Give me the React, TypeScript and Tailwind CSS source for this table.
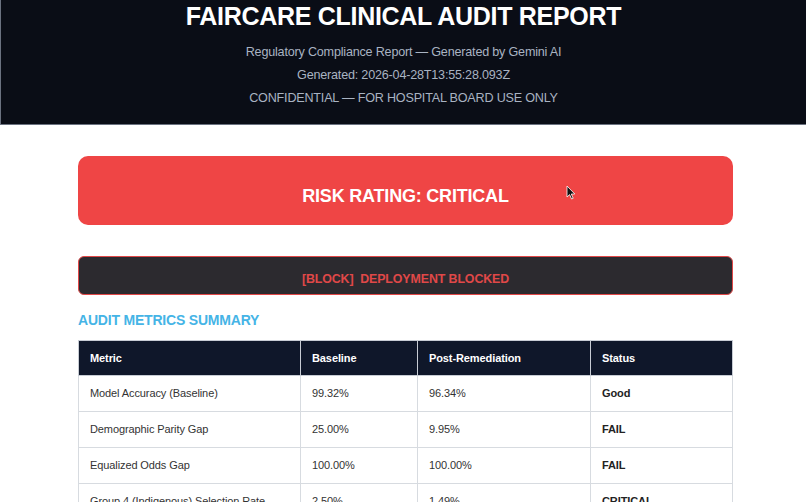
const rows = [
  { metric: "Model Accuracy (Baseline)", baseline: "99.32%", post: "96.34%", status: "Good" },
  { metric: "Demographic Parity Gap", baseline: "25.00%", post: "9.95%", status: "FAIL" },
  { metric: "Equalized Odds Gap", baseline: "100.00%", post: "100.00%", status: "FAIL" },
  { metric: "Group 4 (Indigenous) Selection Rate", baseline: "2.50%", post: "1.49%", status: "CRITICAL" },
];

const App = () => {
  return (
    <div className="w-[806px] h-[502px] overflow-hidden bg-white font-['Liberation_Sans',Arial,sans-serif] relative">
      <header className="h-[125px] bg-[#0a0d16] border-l border-b border-[#6b7280] flex flex-col items-center">
        <h1 className="text-[25px] font-bold text-white tracking-[-0.3px] leading-[32px]">
          FAIRCARE CLINICAL AUDIT REPORT
        </h1>
        <p className="mt-[9px] text-[12.6px] text-[#a9b3c2] leading-[23px] tracking-[-0.2px]">
          Regulatory Compliance Report — Generated by Gemini AI
        </p>
        <p className="text-[12.6px] text-[#a9b3c2] leading-[23px] tracking-[-0.2px]">
          Generated: 2026-04-28T13:55:28.093Z
        </p>
        <p className="text-[12.6px] text-[#a9b3c2] leading-[23px] tracking-[-0.2px]">
          CONFIDENTIAL — FOR HOSPITAL BOARD USE ONLY
        </p>
      </header>

      <main className="pl-[78px] pr-[73px] pt-[31px] flex flex-col">
        <div className="h-[69px] rounded-[10px] bg-[#ef4545] flex items-center justify-center pt-[12px]">
          <span className="text-[18px] font-bold text-white tracking-[-0.2px]">RISK RATING: CRITICAL</span>
        </div>

        <div className="mt-[31px] h-[39px] rounded-[6px] bg-[#2c2a2f] border border-[#e04848] flex items-center justify-center pt-[7px]">
          <span className="text-[12.4px] font-bold text-[#e04848] tracking-[-0.1px] whitespace-pre">[BLOCK]  DEPLOYMENT BLOCKED</span>
        </div>

        <h2 className="mt-[17px] text-[14px] font-bold text-[#45b4e6] tracking-[-0.2px] leading-[17px]">
          AUDIT METRICS SUMMARY
        </h2>

        <table className="mt-[11px] w-full border-collapse text-[11px] tracking-[-0.1px]">
          <thead>
            <tr className="h-[35px] bg-[#0f172a] text-white text-left">
              <th className="w-[222px] px-[11px] font-bold border border-[#c7ccd4]">Metric</th>
              <th className="w-[117px] px-[11px] font-bold border border-[#c7ccd4]">Baseline</th>
              <th className="w-[173px] px-[11px] font-bold border border-[#c7ccd4]">Post-Remediation</th>
              <th className="px-[11px] font-bold border border-[#c7ccd4]">Status</th>
            </tr>
          </thead>
          <tbody>
            {rows.map((r) => (
              <tr key={r.metric} className="h-[36px] text-[#333]">
                <td className="px-[11px] border border-[#d7dbe0]">{r.metric}</td>
                <td className="px-[11px] border border-[#d7dbe0]">{r.baseline}</td>
                <td className="px-[11px] border border-[#d7dbe0]">{r.post}</td>
                <td className="px-[11px] border border-[#d7dbe0] font-bold text-[#222]">{r.status}</td>
              </tr>
            ))}
          </tbody>
        </table>
      </main>

      <svg className="absolute left-[566px] top-[185px]" width="10" height="15" viewBox="0 0 10 15">
        <path d="M1 1 L1 12 L3.6 9.6 L5.6 14 L7.2 13.3 L5.3 9 L8.8 9 Z" fill="#111" stroke="#fff" strokeWidth="0.8" />
      </svg>
    </div>
  );
};

export default App;
